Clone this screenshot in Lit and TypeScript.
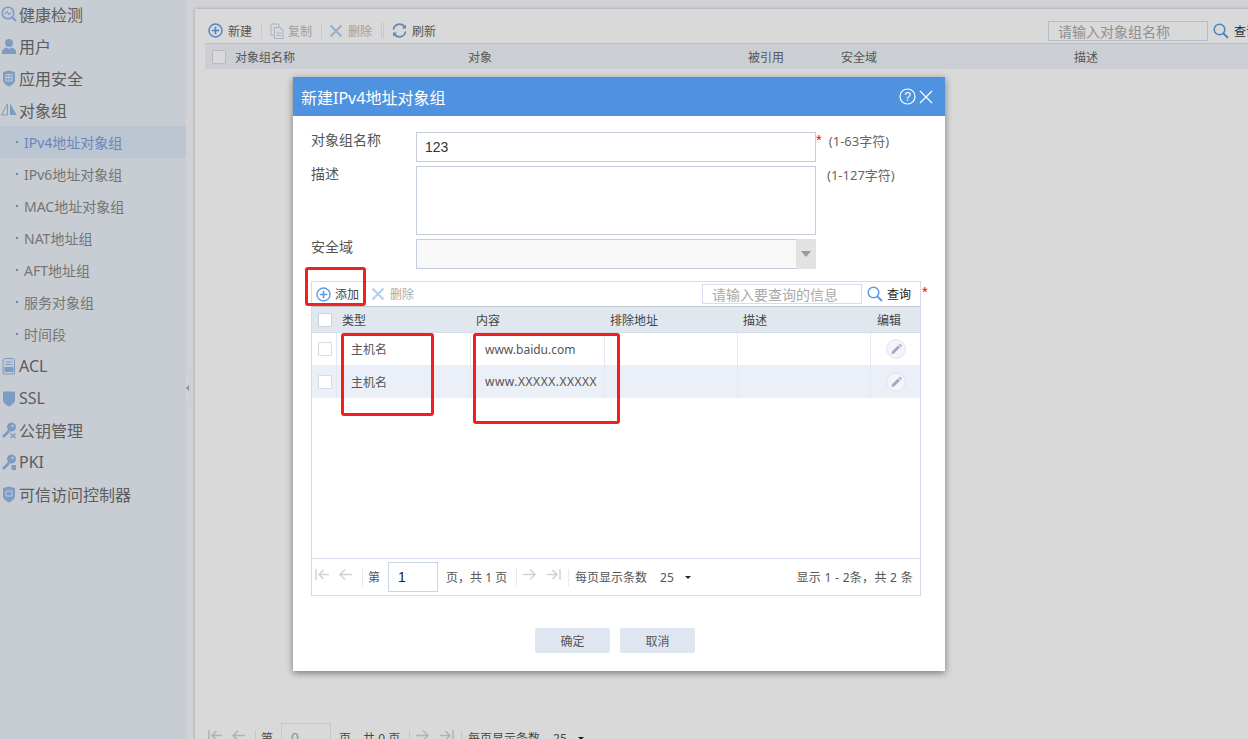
import { LitElement, html, css, svg } from "lit";
import { customElement } from "lit/decorators.js";

const ic = (w: number, h: number, body: unknown, cls = "") =>
  html`<svg class="ic ${cls}" width=${w} height=${h} viewBox="0 0 ${w} ${h}">${body}</svg>`;

const plus = () => ic(15, 15, svg`<circle cx="7.5" cy="7.5" r="6.5" fill="none" stroke="#5b9be6" stroke-width="1.4"/><path d="M7.5 3.8v7.4M3.8 7.5h7.4" stroke="#5b9be6" stroke-width="1.6"/>`);
const cross = () => ic(14, 14, svg`<path d="M1.5 1.5l11 11M12.5 1.5l-11 11" stroke="#b5d0ee" stroke-width="2.2" fill="none"/>`);
const copy = () => ic(14, 16, svg`<path d="M1 1h7l1 1v2M1 1v11h3" fill="none" stroke="#c3d7ee" stroke-width="1.1"/><path d="M4.500 4.500h5.500l3 3v8h-8.500z" fill="none" stroke="#c3d7ee" stroke-width="1.1"/><path d="M6.500 10h5M6.500 12.500h5" stroke="#c3d7ee"/>`);
const refresh = () => ic(15, 15, svg`<path d="M1.500 6.500A6 6 0 0 1 12.500 4" fill="none" stroke="#6f9fd6" stroke-width="1.700"/><path d="M13.500 8.500A6 6 0 0 1 2.500 11" fill="none" stroke="#6f9fd6" stroke-width="1.700"/><path d="M14 1.500v4h-4z" fill="#6f9fd6"/><path d="M1 13.500v-4h4z" fill="#6f9fd6"/>`);
const search = () => ic(16, 16, svg`<circle cx="6.500" cy="6.500" r="5.300" fill="none" stroke="#5b9be6" stroke-width="1.500"/><path d="M10.500 10.500l4.500 4.500" stroke="#5b9be6" stroke-width="2"/>`);
const pencil = () => ic(20, 20, svg`<circle cx="10" cy="10" r="9.300" fill="#f4f5fa" stroke="#dfe2ec"/><path d="M6 12.500l6-6 2 2-6 6-2.500.5z" fill="#a2a7bd"/><path d="M12.800 5.700l1.200-1 2 2-1 1.200z" fill="#a2a7bd"/>`);
const first = () => ic(15, 13, svg`<path d="M1 1v11M14 6.500H4M8.500 2L4 6.500 8.500 11" fill="none" stroke="#d2d2d2" stroke-width="1.500"/>`);
const prev = () => ic(15, 13, svg`<path d="M14 6.500H2M7 1.500L2 6.500l5 5" fill="none" stroke="#d2d2d2" stroke-width="1.500"/>`);
const next = () => ic(15, 13, svg`<path d="M1 6.500h12M8 1.500l5 5-5 5" fill="none" stroke="#d2d2d2" stroke-width="1.500"/>`);
const last = () => ic(15, 13, svg`<path d="M14 1v11M1 6.500h10M6.500 2L11 6.500 6.500 11" fill="none" stroke="#d2d2d2" stroke-width="1.500"/>`);

const B = "#93b7e6";
const navIcons: Record<string, unknown> = {
  health: svg`<circle cx="7" cy="7" r="5.800" fill="none" stroke="${B}" stroke-width="1.500"/><path d="M11 11l4 4" stroke="${B}" stroke-width="2"/><path d="M3 7.500h2l1.200-2.500 1.600 4 1.200-2h2" fill="none" stroke="${B}"/>`,
  user: svg`<circle cx="8" cy="5" r="4" fill="${B}"/><path d="M1 16v-2.500c0-2 3-3.500 4.500-4L8 11l2.500-1.500c1.500.5 4.500 2 4.500 4V16z" fill="${B}"/>`,
  app: svg`<path d="M2 2l6-1.500L14 2v8c0 3-3 5-6 6.500C5 15 2 13 2 10z" fill="${B}"/><rect x="5" y="4.500" width="6" height="6.500" fill="none" stroke="#e6eef9" stroke-width="1"/><path d="M8 4.500v6.500M5 7.500h6" stroke="#e6eef9"/>`,
  group: svg`<path d="M6.500 2v11H.5z" fill="none" stroke="${B}"/><path d="M9 1l6.500 12H9z" fill="${B}"/>`,
  acl: svg`<path d="M3.500.5h9l1 1v14.500H2V2z" fill="#e4ecf8" stroke="${B}"/><path d="M5 4h6M4.500 6.500h7" stroke="${B}"/><rect x="3.500" y="9" width="9" height="5" fill="${B}"/>`,
  ssl: svg`<path d="M2 1.500h12V10c0 3-3 5-6 6.500C5 15 2 13 2 10z" fill="${B}"/>`,
  key: svg`<circle cx="10.500" cy="5" r="4.500" fill="${B}"/><circle cx="11.500" cy="4" r="1.200" fill="#e6eef9"/><path d="M7.500 7.500L1 14l2 2 6-6z" fill="${B}"/><path d="M9.500 11.500l5 4.500M14.500 11.500l-5 4.500" stroke="${B}" stroke-width="1.500"/>`,
  pki: svg`<circle cx="10.500" cy="5" r="4.500" fill="${B}"/><circle cx="11.500" cy="4" r="1.200" fill="#e6eef9"/><path d="M7.500 7.500L1 14l2 2 6-6z" fill="${B}"/><rect x="10.500" y="11" width="4.500" height="5" fill="${B}"/>`,
  trust: svg`<path d="M2 2l6-1.500L14 2v8c0 3-3 5-6 6.500C5 15 2 13 2 10z" fill="${B}"/><path d="M5 5h6v5H5z" fill="none" stroke="#e6eef9"/>`,
};

type Nav = { t: string; i?: string; active?: boolean };
const nav: Nav[] = [
  { t: "健康检测", i: "health" },
  { t: "用户", i: "user" },
  { t: "应用安全", i: "app" },
  { t: "对象组", i: "group" },
  { t: "IPv4地址对象组", active: true },
  { t: "IPv6地址对象组" },
  { t: "MAC地址对象组" },
  { t: "NAT地址组" },
  { t: "AFT地址组" },
  { t: "服务对象组" },
  { t: "时间段" },
  { t: "ACL", i: "acl" },
  { t: "SSL", i: "ssl" },
  { t: "公钥管理", i: "key" },
  { t: "PKI", i: "pki" },
  { t: "可信访问控制器", i: "trust" },
];

const rows = [
  { type: "主机名", content: "www.baidu.com" },
  { type: "主机名", content: "www.XXXXX.XXXXX" },
];

const pager = (page: string, pages: string, right: string, off = false) => html`
  <div class="pager">
    <span class="pg-ic">${first()}</span>
    <span class="pg-ic">${prev()}</span>
    <i class="pg-sep"></i>
    <span class="pg-t first-t">第</span>
    <span class="pg-in ${off ? "off" : ""}">${page}</span>
    <span class="pg-t pg-of">页，共 ${pages} 页</span>
    <i class="pg-sep"></i>
    <span class="pg-ic next">${next()}</span>
    <span class="pg-ic next2">${last()}</span>
    <i class="pg-sep"></i>
    <span class="pg-t pg-size">每页显示条数</span>
    <span class="pg-t pg-n">25</span>
    <i class="caret"></i>
    <span class="pg-t pg-right">${right}</span>
  </div>`;

@customElement("app-root")
export class AppRoot extends LitElement {
  static styles = css`
    :host {
      display: block;
      position: relative;
      width: 1248px;
      height: 739px;
      overflow: hidden;
      background: #f5f7fc;
      font-family: "Noto Sans", "Noto Sans CJK SC", sans-serif;
      font-size: 12px;
      color: #555;
    }
    .ic { display: block; flex: none; }
    .page { display: flex; height: 739px; }
    .side { width: 186px; flex: none; background: #ecf1f8; padding-top: 0; }
    .side-in { margin-top: -2px; }
    .nav { height: 32px; display: flex; align-items: center; font-size: 16px; color: #6e6e6e; white-space: nowrap; }
    .nav .ic { margin: 0 2px 0 1px; }
    .nav.sub { font-size: 14px; color: #8a8a8a; padding-left: 16px; }
    .nav.sub::before { content: ""; width: 2px; height: 2px; background: #7f9fc8; margin-right: 6px; }
    .nav.active { background: #dde8f7; color: #7c9ee0; }
    .gap { width: 9px; flex: none; padding-top: 370px; }
    .handle { width: 4px; height: 34px; border: 1px solid #eceff4; border-left: 0; display: flex; align-items: center; }
    .handle::before { content: ""; border: 3px solid transparent; border-right: 3px solid #a8a8a8; border-left: 0; }
    .main { flex: 1; min-width: 0; margin-top: 9px; background: #fff; box-shadow: 0 0 3px rgba(0,0,0,.25); padding-left: 10px; overflow: hidden; height: 780px; }
    .tb { height: 35px; border-bottom: 1px solid #e0e0e0; display: flex; align-items: center; white-space: nowrap; position: relative; padding-top: 9px; box-sizing: border-box; }
    .tb .ic { margin-right: 5px; }
    .tb-item { display: flex; align-items: center; color: #666; }
    .tb-item.off { color: #bbb; }
    .tsep { width: 1px; height: 16px; background: #ececec; }
    .tb-plus { margin-left: 3px; }
    .tb-sep1 { margin: 0 8px 0 9px; }
    .tb-copy .ic { margin-right: 4px; }
    .tb-sep2 { margin: 0 7px 0 9px; }
    .tb-sep3 { margin: 0 1px 0 9px; }
    .tb-sep4 { margin: 0 8px 0 0; }
    .tb-search { margin-left: auto; display: flex; align-items: center; width: 200px; flex: none; }
    .sbox { box-sizing: border-box; border: 1px solid #d5dcec; background: #fff; color: #aaa; font-size: 14px; width: 160px; display: flex; align-items: center; padding-left: 9px; flex: none; }
    .sbox.big { height: 20px; }
    .tb-search .ic { margin: 0 5px; }
    .tb-search span { color: #333; }
    .thead { height: 25px; background: #eff3f8; display: grid; grid-template-columns: 7px 23px 233px 280px 93px 233px 1fr; align-items: center; color: #666; }
    .cb { box-sizing: border-box; width: 14px; height: 14px; border: 1px solid #d8dadf; background: #fff; border-radius: 1px; }
    .thead .cb { grid-column: 2; }
    .grow { height: 652px; }
    .mask { position: absolute; inset: 0; background: rgba(0,0,0,.15); }
    .modal { position: absolute; left: 293px; top: 77px; width: 652px; height: 594px; background: #fff; box-shadow: 0 2px 7px rgba(0,0,0,.45); }
    .mh { height: 39px; background: #4e92e0; display: flex; align-items: center; color: #fff; font-size: 16px; padding: 0 12px 0 8px; }
    .mh .title { flex: 1; }
    .mh .ic { margin-left: 3px; }
    .mb { padding: 16px 25px 0 18px; }
    .fr { display: grid; grid-template-columns: 105px 400px 1fr; margin-bottom: 4px; color: #555; }
    .fr label { line-height: 16px; font-size: 14px; }
    .in { box-sizing: border-box; height: 30px; border: 1px solid #c3cddc; background: #fff; font-family: "Liberation Sans", sans-serif; font-size: 14px; color: #333; padding: 0 8px; display: flex; align-items: center; }
    .in.area { height: 69px; }
    .in.sel { background: #f8f8f8; padding: 0; justify-content: flex-end; border-right: 0; }
    .sel-b { width: 20px; height: 30px; flex: none; background: #e2e2e2; display: flex; align-items: center; justify-content: center; }
    .sel-b::before { content: ""; border: 5px solid transparent; border-top: 6px solid #9a9a9a; border-bottom: 0; }
    .note { font-size: 13px; color: #666; display: flex; align-items: flex-start; line-height: 18px; white-space: nowrap; }
    .star { color: #f00; font-size: 15px; line-height: 16px; font-family: "Liberation Sans", sans-serif; }
    .n1 { margin-left: 7px; }
    .n2 { margin-left: 11px; }
    .twrap { display: flex; margin-top: 12px; }
    .tbl { box-sizing: border-box; width: 610px; height: 315px; border: 1px solid #d5dbe8; display: flex; flex-direction: column; flex: none; }
    .mtb { height: 24px; flex: none; display: flex; align-items: center; white-space: nowrap; }
    .mtb .a { margin: 0 4px 0 4px; }
    .mtb .add { color: #444; }
    .mtb .x { margin: 0 5px 0 12px; }
    .mtb .del { color: #aaa; }
    .mtb .sbox { margin-left: auto; height: 20px; }
    .mtb .sic { margin: 0 4px 0 5px; }
    .mtb .q { color: #222; margin-right: 9px; }
    .grid { display: grid; grid-template-columns: 25px 134px 134px 133px 133px 1fr; }
    .h { height: 26px; box-sizing: border-box; border-top: 1px solid #bfc6d0; background: #e1e7ee; align-items: center; color: #444; flex: none; }
    .h span { padding-left: 5px; }
    .h .cb, .r .cb { margin-left: 6px; }
    .h .cb { border-color: #ced2da; }
    .h .ed { padding-left: 6px; }
    .r { height: 33px; flex: none; box-sizing: border-box; }
    .r.one { border-top: 1px solid #d5dbe8; }
    .r.two { background: #ebeff7; }
    .r > div { border-right: 1px solid #e4e7ee; display: flex; align-items: center; color: #555; padding-left: 14px; min-width: 0; white-space: nowrap; box-sizing: border-box; }
    .r > div:first-child { padding-left: 0; }
    .r.two > div:nth-child(3) { letter-spacing: .5px; }
    .r > div:last-child { border-right: 0; padding-left: 15px; }
    .filler { flex: 1; border-bottom: 1px solid #d5dbe8; }
    .tstar { margin-left: 1px; padding-top: 3px; }
    .pager { display: flex; align-items: center; height: 36px; white-space: nowrap; flex: none; color: #555; position: relative; }
    .pg-ic { width: 15px; margin-left: 3px; margin-top: -5px; }
    .pg-ic + .pg-ic { margin-left: 8px; }
    .pg-sep { width: 1px; height: 17px; background: #e8e8e8; margin-left: 9px; }
    .pg-t { margin-left: 6px; }
    .first-t { margin-left: 5px; }
    .pg-in { box-sizing: border-box; width: 50px; height: 30px; border: 1px solid #c9d6e6; margin-left: 8px; padding-left: 9px; display: flex; align-items: center; font-family: "Liberation Sans", sans-serif; font-size: 14px; color: #222; background: #fff; }
    .pg-in.off { color: #aaa; border-color: #ececec; }
    .pg-of { margin-left: 8px; width: 62px; }
    .pg-of + .pg-sep { margin-left: 8px; }
    .next { margin-left: 5px; }
    .pg-ic.next2 { margin-left: 9px; }
    .next2 + .pg-sep { margin-left: 7px; }
    .pg-n { margin-left: 13px; }
    .caret { border: 3px solid transparent; border-top: 3px solid #222; border-bottom: 0; margin-left: 11px; }
    .pg-right { margin-left: auto; margin-right: 7px; letter-spacing: .3px; }
    .bpager { margin-top: -1px; }
    .btns { display: flex; justify-content: center; gap: 10px; margin-top: 32px; margin-left: -1px; }
    .btn { width: 75px; height: 25px; background: #e0e6f1; border-radius: 2px; display: flex; align-items: center; justify-content: center; color: #555; }
    .anno { position: absolute; box-sizing: border-box; border: 3px solid #f2201c; border-radius: 3px; }
    .a1 { left: 305px; top: 267px; width: 61px; height: 39px; }
    .a2 { left: 341px; top: 333px; width: 93px; height: 83px; }
    .a3 { left: 473px; top: 333px; width: 147px; height: 91px; }
  `;

  render() {
    return html`
      <div class="page">
        <aside class="side"><div class="side-in">
          ${nav.map((n) => n.i
            ? html`<div class="nav">${ic(16, 17, navIcons[n.i])}${n.t}</div>`
            : html`<div class="nav sub ${n.active ? "active" : ""}">${n.t}</div>`)}
        </div></aside>
        <div class="gap"><div class="handle"></div></div>
        <main class="main">
          <div class="tb">
            <div class="tb-item tb-plus">${plus()}新建</div>
            <i class="tsep tb-sep1"></i>
            <div class="tb-item off tb-copy">${copy()}复制</div>
            <i class="tsep tb-sep2"></i>
            <div class="tb-item off">${cross()}删除</div>
            <i class="tsep tb-sep3"></i>
            <i class="tsep tb-sep4"></i>
            <div class="tb-item">${refresh()}刷新</div>
            <div class="tb-search">
              <div class="sbox big">请输入对象组名称</div>
              ${search()}<span>查询</span>
            </div>
          </div>
          <div class="thead">
            <i class="cb"></i>
            <span>对象组名称</span><span>对象</span><span>被引用</span><span>安全域</span><span>描述</span>
          </div>
          <div class="grow"></div>
          <div class="bpager">${pager("0", "0", "", true)}</div>
        </main>
      </div>
      <div class="mask"></div>
      <section class="modal">
        <header class="mh">
          <span class="title">新建IPv4地址对象组</span>
          ${ic(17, 17, svg`<circle cx="8.500" cy="8.500" r="7.500" fill="none" stroke="#fff" stroke-width="1.200"/><text x="8.500" y="12.500" text-anchor="middle" fill="#fff" font-size="12" font-family="Liberation Sans">?</text>`)}
          ${ic(14, 14, svg`<path d="M1 1l12 12M13 1L1 13" stroke="#fff" stroke-width="1.200"/>`)}
        </header>
        <div class="mb">
          <div class="fr"><label>对象组名称</label><div class="in">123</div><div class="note"><span class="star">*</span><span class="n1">(1-63字符)</span></div></div>
          <div class="fr"><label>描述</label><div class="in area"></div><div class="note"><span class="n2">(1-127字符)</span></div></div>
          <div class="fr"><label>安全域</label><div class="in sel"><i class="sel-b"></i></div><div></div></div>
          <div class="twrap">
            <div class="tbl">
              <div class="mtb">
                <span class="a">${plus()}</span><span class="add">添加</span>
                <span class="x">${cross()}</span><span class="del">删除</span>
                <div class="sbox">请输入要查询的信息</div>
                <span class="sic">${search()}</span><span class="q">查询</span>
              </div>
              <div class="grid h"><i class="cb"></i><span>类型</span><span>内容</span><span>排除地址</span><span>描述</span><span class="ed">编辑</span></div>
              ${rows.map((r, i) => html`
                <div class="grid r ${i ? "two" : "one"}">
                  <div><i class="cb"></i></div>
                  <div>${r.type}</div>
                  <div>${r.content}</div>
                  <div></div>
                  <div></div>
                  <div>${pencil()}</div>
                </div>`)}
              <div class="filler"></div>
              ${pager("1", "1", "显示 1 - 2条，共 2 条")}
            </div>
            <span class="star tstar">*</span>
          </div>
          <div class="btns"><div class="btn">确定</div><div class="btn">取消</div></div>
        </div>
      </section>
      <i class="anno a1"></i>
      <i class="anno a2"></i>
      <i class="anno a3"></i>
    `;
  }
}
